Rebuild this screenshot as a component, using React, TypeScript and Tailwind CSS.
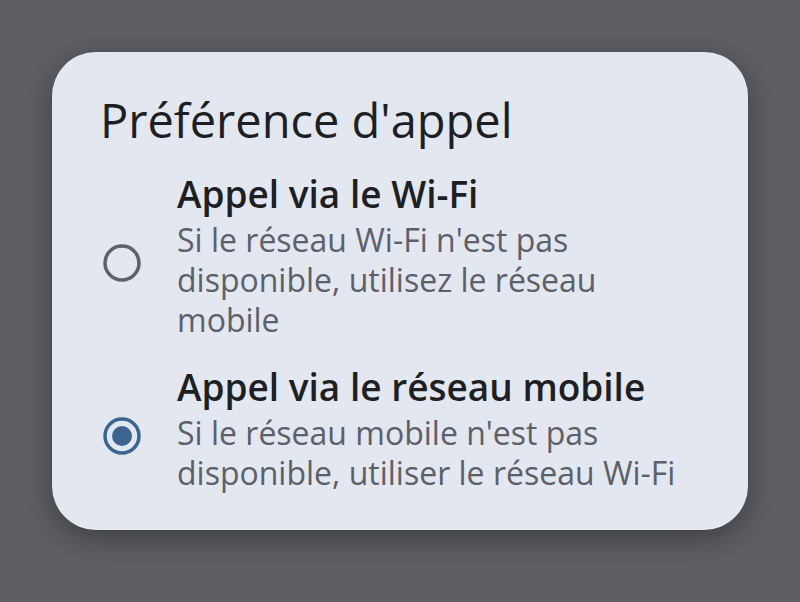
import { useState } from "react";

const options = [
  {
    id: "wifi",
    title: "Appel via le Wi-Fi",
    lines: ["Si le réseau Wi-Fi n'est pas", "disponible, utilisez le réseau", "mobile"],
  },
  {
    id: "mobile",
    title: "Appel via le réseau mobile",
    lines: ["Si le réseau mobile n'est pas", "disponible, utiliser le réseau Wi-Fi"],
  },
];

const Radio = ({ checked }: { checked: boolean }) => (
  <svg width="40" height="40" viewBox="0 0 40 40" className="shrink-0">
    <circle
      cx="20"
      cy="20"
      r="17"
      fill="none"
      stroke={checked ? "#3a6590" : "#5f6166"}
      strokeWidth="3.5"
    />
    {checked && <circle cx="20" cy="20" r="10" fill="#3a6590" />}
  </svg>
);

const App = () => {
  const [selected, setSelected] = useState("mobile");

  return (
    <div className="w-[800px] h-[602px] bg-[#5e5f63] flex items-start justify-center pt-[52px] font-['Open_Sans',sans-serif]">
      <div className="w-[696px] h-[478px] bg-[#e3e7f0] rounded-[44px] shadow-[0_8px_30px_rgba(0,0,0,0.35)] pl-[48px] pr-[40px] pt-[38px]">
        <h1 className="text-[47px] leading-[60px] text-[#1d1f22] font-normal">
          Préférence d'appel
        </h1>
        <div className="mt-[18px] flex flex-col gap-[21px]">
          {options.map((o) => (
            <button
              key={o.id}
              onClick={() => setSelected(o.id)}
              className="flex items-center gap-[35px] text-left pl-[2px]"
            >
              <div className="pt-[18px]">
                <Radio checked={selected === o.id} />
              </div>
              <div className="flex flex-col">
                <span className="text-[37px] leading-[52px] font-semibold text-[#1e1f23] whitespace-nowrap">
                  {o.title}
                </span>
                {o.lines.map((l) => (
                  <span
                    key={l}
                    className="text-[32px] leading-[40px] text-[#5c6068] whitespace-nowrap"
                  >
                    {l}
                  </span>
                ))}
              </div>
            </button>
          ))}
        </div>
      </div>
    </div>
  );
};

export default App;
